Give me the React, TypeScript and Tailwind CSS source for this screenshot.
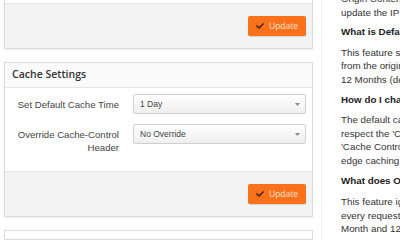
import React from "react";
import { FaCheck } from "react-icons/fa";

function UpdateButton() {
  return (
    <button className="flex items-center justify-center gap-[5px] w-[58px] h-[20px] rounded-[2px] bg-[#f9711a] shadow-[0_1px_1px_rgba(0,0,0,0.12)]">
      <FaCheck className="w-[8px] h-[8px] text-[#3b2414]" />
      <span className="text-[8.5px] leading-none text-[#ffe5d3] font-['Open_Sans',sans-serif]">Update</span>
    </button>
  );
}

function Select({ value }: { value: string }) {
  return (
    <div className="flex items-center justify-between h-[20px] pl-[6px] pr-[5px] rounded-[2px] border border-[#cfcfcf] bg-gradient-to-b from-white to-[#efefef] shadow-[inset_0_1px_0_rgba(255,255,255,0.8)]">
      <span className="text-[8.5px] text-[#444] font-['Liberation_Sans',Arial,sans-serif]">{value}</span>
      <svg width="5" height="3" viewBox="0 0 5 3">
        <path d="M0 0 L5 0 L2.5 3 Z" fill="#888" />
      </svg>
    </div>
  );
}

const lines = (arr: string[]) =>
  arr.map((t, i) => (
    <div key={i} className="whitespace-nowrap">
      {t}
    </div>
  ));

export default function App() {
  return (
    <div className="w-[400px] h-[240px] overflow-hidden bg-white flex font-['Liberation_Sans',Arial,sans-serif]">
      <div className="w-[322px] shrink-0 pl-[4px] pr-[8px] border-r border-[#f1f1f1] flex flex-col gap-[13px] -mt-px">
        <div className="border border-[#dcdcdc] bg-white shadow-[0_1px_2px_rgba(0,0,0,0.08)]">
          <div className="h-[3px]" />
          <div className="h-[45px] border-t border-[#e6e6e6] bg-[#f3f3f3] flex items-center justify-end pr-[6px]">
            <UpdateButton />
          </div>
        </div>

        <div className="border border-[#dcdcdc] bg-white shadow-[0_1px_2px_rgba(0,0,0,0.08)]">
          <div className="h-[25px] border-b border-[#e6e6e6] bg-[#fafafa] flex items-center pl-[7px]">
            <span className="text-[10.5px] font-semibold text-[#333] font-['Open_Sans',sans-serif]">Cache Settings</span>
          </div>
          <div className="h-[83px] pt-[6px] pr-[6px] grid grid-cols-[114px_1fr] gap-x-[14px] gap-y-[10px] content-start">
            <div className="pt-[3.5px] text-right text-[9.6px] leading-[13px] text-[#444]">Set Default Cache Time</div>
            <Select value="1 Day" />
            <div className="pt-[4px] text-right text-[9.6px] leading-[13px] text-[#444]">
              Override Cache-Control
              <br />
              Header
            </div>
            <Select value="No Override" />
          </div>
          <div className="h-[45px] border-t border-[#e6e6e6] bg-[#f3f3f3] flex items-center justify-end pr-[6px]">
            <UpdateButton />
          </div>
        </div>

        <div className="h-[40px] border border-[#dcdcdc] bg-white" />
      </div>

      <div className="pl-[19px] -mt-[8px] text-[9.8px] leading-[13.5px] text-[#333] flex flex-col">
        <div>{lines(["Origin Content Settings allow you to", "update the IP address of your origin server."])}</div>
        <div className="mt-[5.5px] font-bold text-[#222] whitespace-nowrap">What is Default Cache Time?</div>
        <div className="mt-[7.5px]">
          {lines([
            "This feature sets the time content is cached",
            "from the origin. Options range from 1 Day to",
            "12 Months (default is 1 Day).",
          ])}
        </div>
        <div className="mt-[6.5px] font-bold text-[#222] whitespace-nowrap">How do I change the Cache Settings?</div>
        <div className="mt-[7px]">
          {lines([
            "The default cache settings will always",
            "respect the 'Cache-Control' header. Setting",
            "'Cache Control Header' to override will force",
            "edge caching for the selected time.",
          ])}
        </div>
        <div className="mt-[7px] font-bold text-[#222] whitespace-nowrap">What does Override Cache-Control do?</div>
        <div className="mt-[7.5px]">
          {lines([
            "This feature ignores the header and caches",
            "every request for the selected time: 1 Day, 1",
            "Month and 12 Months.",
          ])}
        </div>
      </div>
    </div>
  );
}
